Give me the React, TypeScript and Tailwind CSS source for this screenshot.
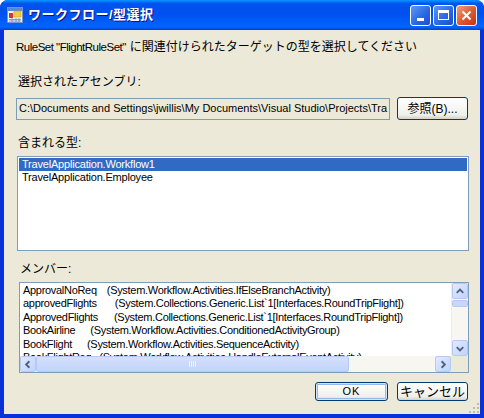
import React from 'react';

const jp = { fontFamily: '"Liberation Sans", "Noto Sans CJK JP", sans-serif' };

type Member = { name: string; type: string; gap: number };

const members: Member[] = [
    { name: 'ApprovalNoReq', type: '(System.Workflow.Activities.IfElseBranchActivity)', gap: 10 },
    { name: 'approvedFlights', type: '(System.Collections.Generic.List`1[Interfaces.RoundTripFlight])', gap: 18 },
    { name: 'ApprovedFlights', type: '(System.Collections.Generic.List`1[Interfaces.RoundTripFlight])', gap: 16 },
    { name: 'BookAirline', type: '(System.Workflow.Activities.ConditionedActivityGroup)', gap: 15 },
    { name: 'BookFlight', type: '(System.Workflow.Activities.SequenceActivity)', gap: 15 },
    { name: 'BookFlightReq', type: '(System.Workflow.Activities.HandleExternalEventActivity)', gap: 8 },
];

// XP style push button
const XpButton = ({ label, className, isDefault }: { label: React.ReactNode; className: string; isDefault?: boolean }) => (
    <button
        className={`rounded-[3px] border border-[#003C74] bg-[linear-gradient(#FFFFFF,#F0F0EA_80%,#D6D0C5)] text-[12px] text-black flex items-center justify-center ${className} ${isDefault ? 'shadow-[inset_0_0_0_1px_#CEE7FF,inset_0_0_0_2px_#98B8EA]' : ''}`}
        style={jp}
    >
        {label}
    </button>
);

const ArrowBtn = ({ dir }: { dir: 'up' | 'down' | 'left' | 'right' }) => {
    const paths: Record<string, string> = {
        up: 'M4 9 L7.5 5.5 L11 9',
        down: 'M4 6 L7.5 9.5 L11 6',
        left: 'M9 4 L5.5 7.5 L9 11',
        right: 'M6 4 L9.5 7.5 L6 11',
    };
    return (
        <div className="w-[16px] h-[16px] shrink-0 rounded-[2px] border border-[#B7CAF5] bg-[linear-gradient(135deg,#E1EAFE,#C1D3FB)] flex items-center justify-center">
            <svg width="15" height="15" viewBox="0 0 15 15">
                <path d={paths[dir]} fill="none" stroke="#4D6185" strokeWidth="2" />
            </svg>
        </div>
    );
};

const TitleIcon = () => (
    <svg width="16" height="16" viewBox="0 0 16 16">
        <rect x="0.5" y="0.5" width="15" height="15" fill="#F4F2E8" stroke="#7A96C8" />
        <rect x="1" y="1" width="14" height="3" fill="#5B87D8" />
        <rect x="7" y="4" width="7" height="6" fill="#F5C842" stroke="#C8962A" strokeWidth="0.5" />
        <rect x="2" y="6" width="4" height="5" fill="#D8352A" />
        <path d="M2 12.5 H14 M2 14 H14 M5 11 V15 M9 11 V15 M12 11 V15" stroke="#6C8BC4" strokeWidth="0.8" />
    </svg>
);

const App = () => {
    return (
        <div className="w-[484px] h-[418px] flex flex-col bg-[#0831D9] rounded-t-[8px] overflow-hidden" style={jp}>
            {/* Title bar */}
            <div className="h-[30px] shrink-0 flex items-center pl-[7px] pr-[7px] bg-[linear-gradient(#0997FF,#0053EE_12%,#0050EE_45%,#0066FF_90%,#0041C8)]">
                <TitleIcon />
                <span className="ml-[5px] text-white font-bold text-[13px] tracking-[0.5px] [text-shadow:1px_1px_#0F1089]">
                    ワークフロー/型選択
                </span>
                <div className="ml-auto flex gap-[2px]">
                    <div className="w-[21px] h-[21px] rounded-[3px] border border-white bg-[linear-gradient(135deg,#5C98FF,#2865E0_60%,#1D4FC9)] flex items-end justify-center pb-[4px]">
                        <div className="w-[7px] h-[3px] bg-white" />
                    </div>
                    <div className="w-[21px] h-[21px] rounded-[3px] border border-white bg-[linear-gradient(135deg,#5C98FF,#2865E0_60%,#1D4FC9)] flex items-center justify-center">
                        <div className="w-[11px] h-[10px] border border-white border-t-[3px]" />
                    </div>
                    <div className="w-[21px] h-[21px] rounded-[3px] border border-white bg-[linear-gradient(135deg,#F0A080,#E0552F_55%,#C2331A)] flex items-center justify-center">
                        <svg width="11" height="11" viewBox="0 0 11 11">
                            <path d="M1.5 1.5 L9.5 9.5 M9.5 1.5 L1.5 9.5" stroke="white" strokeWidth="2" />
                        </svg>
                    </div>
                </div>
            </div>

            {/* Client area */}
            <div className="flex-1 mx-[4px] mb-[4px] bg-[#ECE9D8] flex flex-col pl-[12px] pr-[11px] text-black relative">
                <div className="mt-[10px] h-[14px] text-[12px] leading-[14px] flex items-center">
                    <span className="tracking-[-0.5px] text-[11.5px] mr-[4px]">RuleSet "FlightRuleSet"</span>
                    <span>に関連付けられたターゲットの型を選択してください</span>
                </div>

                <div className="mt-[21px] h-[14px] text-[12px] leading-[14px] ml-[2px]">選択されたアセンブリ:</div>

                <div className="mt-[8px] flex items-center">
                    <div className="w-[374px] h-[22px] border border-[#7F9DB9] bg-[#ECE9D8] flex items-center pl-[2px] text-[11px] tracking-[0px] whitespace-nowrap overflow-hidden">
                        C:\Documents and Settings\jwillis\My Documents\Visual Studio\Projects\Tra
                    </div>
                    <XpButton label="参照(B)..." className="ml-[7px] w-[71px] h-[23px]" />
                </div>

                <div className="mt-[16px] h-[14px] text-[12px] leading-[14px] ml-[2px]">含まれる型:</div>

                <div className="mt-[6px] ml-[1px] w-[452px] h-[95px] border border-[#7F9DB9] bg-white p-[1px] text-[11px] tracking-[-0.2px]">
                    <div className="h-[13px] leading-[13px] bg-[#316AC5] text-white pl-[3px]">TravelApplication.Workflow1</div>
                    <div className="h-[13px] leading-[13px] pl-[3px]">TravelApplication.Employee</div>
                </div>

                <div className="mt-[11px] h-[14px] text-[12px] leading-[14px] ml-[4px]">メンバー:</div>

                {/* Members list with scrollbars */}
                <div className="mt-[6px] ml-[3px] w-[450px] h-[91px] border border-[#7F9DB9] bg-white flex flex-col overflow-hidden">
                    <div className="flex flex-1 min-h-0">
                        <div className="flex-1 overflow-hidden pt-[1px] pl-[3px] text-[11px] tracking-[-0.3px] whitespace-nowrap">
                            {members.map((m) => (
                                <div key={m.name} className="h-[13.4px] leading-[13px] flex">
                                    <span>{m.name}</span>
                                    <span style={{ marginLeft: m.gap }}>{m.type}</span>
                                </div>
                            ))}
                        </div>
                        <div className="w-[17px] flex flex-col bg-[#F7F6F1] border-l border-[#EEEDE5]">
                            <ArrowBtn dir="up" />
                            <div className="mt-[1px] h-[7px] w-[16px] rounded-[2px] border border-[#B7CAF5] bg-[#C8D6FA]" />
                            <div className="flex-1" />
                            <ArrowBtn dir="down" />
                        </div>
                    </div>
                    <div className="h-[16px] flex bg-[#F7F6F1]">
                        <ArrowBtn dir="left" />
                        <div className="w-[313px] h-[16px] rounded-[2px] border border-[#B7CAF5] bg-[linear-gradient(#D4E0FC,#C2D3FB)] flex items-center justify-center gap-[1px]">
                            <div className="w-[1px] h-[6px] bg-[#EEF3FE]" />
                            <div className="w-[1px] h-[6px] bg-[#EEF3FE]" />
                            <div className="w-[1px] h-[6px] bg-[#EEF3FE]" />
                            <div className="w-[1px] h-[6px] bg-[#EEF3FE]" />
                        </div>
                        <div className="flex-1" />
                        <ArrowBtn dir="right" />
                        <div className="w-[17px] bg-[#ECE9D8]" />
                    </div>
                </div>

                {/* Dialog buttons */}
                <div className="mt-[9px] flex justify-end gap-[9px] pr-[1px]">
                    <XpButton label={<span className="tracking-[1px] text-[11px]">OK</span>} className="w-[73px] h-[19px]" isDefault />
                    <XpButton label="キャンセル" className="w-[71px] h-[19px] text-[13px]" />
                </div>

                {/* resize grip */}
                <svg className="absolute right-[1px] bottom-[1px]" width="11" height="11" viewBox="0 0 11 11">
                    {[[9, 1], [9, 5], [5, 5], [9, 9], [5, 9], [1, 9]].map(([x, y]) => (
                        <rect key={`${x}-${y}`} x={x} y={y} width="2" height="2" fill="#C0BCA8" />
                    ))}
                </svg>
            </div>
        </div>
    );
};

export default App;
